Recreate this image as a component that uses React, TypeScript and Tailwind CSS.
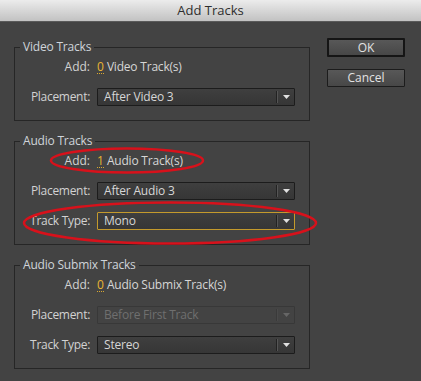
import React from "react"

const font = { fontFamily: '"Open Sans", "DejaVu Sans", sans-serif' }

function Select({ value, disabled, focused }: { value: string; disabled?: boolean; focused?: boolean }) {
  return (
    <div
      className={`flex h-[18px] w-[198px] items-center rounded-[1px] border ${
        focused ? "border-[#c49a2c]" : disabled ? "border-[#383838]" : "border-[#1c1c1c]"
      } ${disabled ? "bg-[#434343]" : "bg-gradient-to-b from-[#3f3f3f] to-[#363636]"}`}
    >
      <span className={`flex-1 pl-[6px] text-[12px] leading-none tracking-[-0.2px] ${disabled ? "text-[#6f6f6f]" : "text-[#d6d6d6]"}`}>
        {value}
      </span>
      <div className={`h-[12px] w-px ${disabled ? "bg-[#3a3a3a]" : "bg-[#222]"}`}></div>
      <div className={`h-[12px] w-px ${disabled ? "bg-[#4a4a4a]" : "bg-[#555]"}`}></div>
      <div className="flex w-[16px] justify-center">
        <svg width="7" height="4" viewBox="0 0 7 4">
          <path d="M0 0 H7 L3.5 4 Z" fill={disabled ? "#666" : "#e0e0e0"} />
        </svg>
      </div>
    </div>
  )
}

function Row({ label, children, className = "" }: { label: string; children: React.ReactNode; className?: string }) {
  return (
    <div className={`flex items-center ${className}`}>
      <span className="w-[76px] pr-[1px] text-right text-[12px] leading-none tracking-[-0.3px] text-[#d2d2d2]">{label}</span>
      <div className="ml-[6px]">{children}</div>
    </div>
  )
}

function AddRow({ count, noun }: { count: string; noun: string }) {
  return (
    <div className="flex h-[26px] items-center">
      <span className="w-[76px] pr-[1px] text-right text-[12px] leading-none text-[#d2d2d2]">Add:</span>
      <span className="ml-[6px] border-b border-dotted border-[#d9a830] text-[12px] leading-[13px] text-[#e8b532]">{count}</span>
      <span className="ml-[3px] text-[12px] leading-none tracking-[-0.2px] text-[#d6d6d6]">{noun}</span>
    </div>
  )
}

function Group({ title, children }: { title: string; children: React.ReactNode }) {
  return (
    <fieldset className="w-[296px] border border-[#262626] px-0 pb-[14px]">
      <legend className="ml-[5px] px-[3px] text-[12px] leading-[14px] tracking-[-0.2px] text-[#cfd4da]">{title}</legend>
      {children}
    </fieldset>
  )
}

export default function App() {
  return (
    <div className="relative h-[381px] w-[421px] overflow-hidden bg-[#434343]" style={font}>
      {/* title bar */}
      <div className="flex h-[22px] items-center justify-center border-b border-[#5a5a5a] bg-gradient-to-b from-[#ececec] to-[#c2c2c2] text-[13px] text-[#2e2e2e]">
        Add Tracks
      </div>

      <div className="flex">
        <div className="ml-[14px] mt-[18px] flex flex-col gap-[13px]">
          <Group title="Video Tracks">
            <AddRow count="0" noun="Video Track(s)" />
            <Row label="Placement:" className="mt-[8px]">
              <Select value="After Video 3" />
            </Row>
          </Group>

          <Group title="Audio Tracks">
            <AddRow count="1" noun="Audio Track(s)" />
            <Row label="Placement:" className="mt-[8px]">
              <Select value="After Audio 3" />
            </Row>
            <Row label="Track Type:" className="mt-[12px]">
              <Select value="Mono" focused />
            </Row>
          </Group>

          <Group title="Audio Submix Tracks">
            <AddRow count="0" noun="Audio Submix Track(s)" />
            <Row label="Placement:" className="mt-[8px]">
              <Select value="Before First Track" disabled />
            </Row>
            <Row label="Track Type:" className="mt-[12px]">
              <Select value="Stereo" />
            </Row>
          </Group>
        </div>

        <div className="ml-[17px] mt-[16px] flex flex-col gap-[12px]">
          <button className="h-[19px] w-[78px] rounded-[1px] border-2 border-[#151515] bg-gradient-to-b from-[#585858] to-[#474747] text-[12px] leading-none text-[#e2e2e2]">
            OK
          </button>
          <button className="h-[18px] w-[78px] rounded-[1px] border border-[#1c1c1c] bg-gradient-to-b from-[#585858] to-[#474747] text-[12px] leading-none text-[#e2e2e2]">
            Cancel
          </button>
        </div>
      </div>

      {/* red annotation ellipses */}
      <svg className="pointer-events-none absolute left-0 top-0" width="421" height="381">
        <ellipse cx="127" cy="160.5" rx="76" ry="12" fill="none" stroke="#d8111b" strokeWidth="2.5" />
        <ellipse cx="170" cy="223" rx="146" ry="20.5" fill="none" stroke="#d8111b" strokeWidth="2.5" />
      </svg>
    </div>
  )
}
